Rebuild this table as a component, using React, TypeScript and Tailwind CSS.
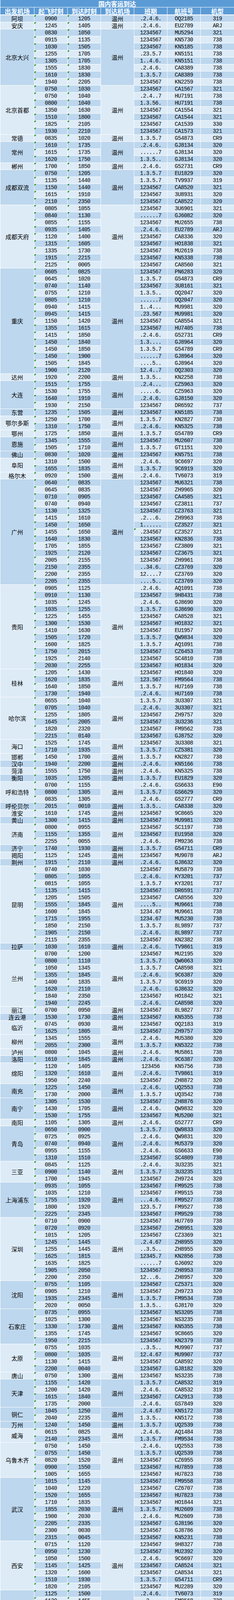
import React from 'react';

const DATA: [string, string[]][] = [
  ['阿坝', ['0900 1205 .2.4.6. OQ2185 319']],
  ['安庆', ['1245 1405 .2.4.6. EU2789 ARJ']],
  ['北京大兴', [
    '0830 1050 1234567 MU5294 321',
    '0915 1135 1234567 KN5730 738',
    '1030 1505 1234567 KN5185 738',
    '1255 1705 .23.5.7 KN5151 738',
    '1305 1705 1..4.6. KN5151 738',
    '1555 1830 .2.4.6. CA8389 738',
    '1610 1830 1.3.5.7 CA8389 738',
    '1940 2205 1234567 KN2259 738',
  ]],
  ['北京首都', [
    '0750 1030 1234567 CA1567 321',
    '0750 1040 .2.4..7 HU7191 738',
    '0800 1040 1.3.56. HU7191 738',
    '1350 1630 1234567 CA1554 321',
    '1510 1800 1234567 CA1544 321',
    '1825 2105 1234567 CA1539 330',
    '1930 2210 1234567 CA1573 321',
  ]],
  ['常德', ['0835 1020 1.3.5.7 G54873 CR9']],
  ['常州', [
    '1610 1735 .2.4.6. GJ8134 320',
    '1615 1735 ......7 GJ8134 320',
    '1620 1750 1.3.5.. GJ8134 320',
  ]],
  ['郴州', ['1700 1850 .2.4.6. G52731 CR9']],
  ['成都双流', [
    '0750 1205 1.3.5.7 EU1829 320',
    '1135 1440 1.3.5.7 TV9937 319',
    '1150 1440 1234567 CA8520 321',
    '1615 1910 1234567 3U8931 320',
    '2110 2350 1234567 CA8522 320',
  ]],
  ['成都天府', [
    '0805 1055 1234567 3U6901 321',
    '0840 1130 ......7 GJ6082 320',
    '0855 1155 1234567 MU2655 738',
    '0935 1405 .2.4.6. EU2789 ARJ',
    '1120 1400 1234567 CA8336 320',
    '1315 1605 1234567 HO1838 321',
    '1335 1730 1234567 MU2619 738',
    '1915 2215 1234567 KN5338 738',
    '2125 0005 1234567 CA8560 321',
  ]],
  ['重庆', [
    '0605 0825 1234567 PN6283 320',
    '0645 1020 1.3.5.7 G54873 CR9',
    '0740 1140 1234567 3U8161 321',
    '0755 1210 1.3.5.. OQ2047 320',
    '0805 1210 ......7 OQ2047 320',
    '0940 1415 1..4... MU9981 320',
    '0945 1415 .23.567 MU9981 320',
    '1150 1420 1234567 CA8554 321',
    '1355 1615 1234567 HU7405 738',
    '1415 1850 .2.4.6. G52731 CR9',
    '1450 1840 1.3.... GJ8964 320',
    '1450 1850 1.3.5.7 G54789 CR9',
    '1450 1900 ......7 GJ8964 320',
    '1505 1845 ....5.. GJ8964 320',
    '1900 2120 12.4..7 OQ2303 320',
  ]],
  ['达州', ['1920 2200 1.3.5.. KN2258 738']],
  ['大连', [
    '1515 1755 .2.4... CZ5963 320',
    '1530 1755 .....6. CZ5963 320',
    '1640 1910 .2.4.6. GJ8150 320',
    '1930 2150 1234567 DR6592 737',
  ]],
  ['东营', ['1235 1505 1234567 KN5185 738']],
  ['鄂尔多斯', [
    '1250 1700 1.3.5.7 KN2827 738',
    '1310 1750 .2.4.6. KN5325 738',
  ]],
  ['鄂州', ['1725 1850 1.3.5.7 G54789 CR9']],
  ['恩施', [
    '1345 1555 1234567 MU2607 738',
    '1505 1710 1.3.5.7 GT1151 320',
  ]],
  ['佛山', ['0830 1020 1234567 KN5751 738']],
  ['阜阳', [
    '1310 1500 .2.4.6. 9C6697 320',
    '1655 1835 1.3.5.7 9C6919 320',
  ]],
  ['格尔木', ['0920 1500 .2.4.6. TV6073 319']],
  ['广州', [
    '0640 0835 1234567 MU6321 738',
    '0645 0835 1234567 ZH9965 320',
    '0710 0905 1234567 CA4585 321',
    '0740 0940 1234567 CZ3811 737',
    '1130 1325 1234567 CZ3763 321',
    '1415 1610 .2...6. ZH9963 738',
    '1450 1650 1...... CZ3527 321',
    '1455 1650 *.234567 CZ3527 321',
    '1640 1830 1234567 KN2836 738',
    '1705 1855 1234567 CZ3809 321',
    '1925 2120 1234567 CZ3675 321',
    '2005 2155 1234567 ZH9961 738',
    '2150 2355 ..34.6. CZ3769 320',
    '2200 2355 12....7 CZ3769 320',
    '2205 2355 ....5.. CZ3769 320',
  ]],
  ['贵阳', [
    '0905 1125 .2.4.6. AQ1091 738',
    '0910 1130 1234567 9H8431 738',
    '1035 1245 .2.4.6. GJ8690 320',
    '1035 1255 1.3.5.7 GJ8690 320',
    '1225 1455 1234567 CA8528 321',
    '1300 1530 1234567 HO1832 321',
    '1410 1630 1234567 EU1957 320',
    '1505 1720 1.3.5.7 QW9834 320',
    '1600 1825 1.3.5.7 AQ1091 738',
    '1750 2015 1234567 CZ6453 738',
    '1925 2140 1234567 SC4810 738',
    '2030 2255 1234567 HO1834 320',
  ]],
  ['桂林', [
    '1205 1430 1234567 HO1840 320',
    '1620 1835 123.567 FM9564 738',
    '1640 1850 1.3.5.7 HU7169 738',
    '1730 1940 .2.4.6. HU7169 738',
  ]],
  ['哈尔滨', [
    '0655 1040 1.3.5.7 3U3307 321',
    '0705 1040 .2.4.6. 3U3307 321',
    '1255 1805 1234567 ZH9757 320',
    '1645 2005 1234567 3U3236 321',
    '1820 2320 1234567 FM9562 738',
    '2215 0140 1234567 GJ8752 320',
  ]],
  ['海口', [
    '1525 1745 1234567 3U3308 321',
    '1710 1935 1.3.5.7 CZ5381 320',
  ]],
  ['邯郸', ['1450 1700 1.3.5.7 KN2827 738']],
  ['汉中', ['1940 2200 .2.4.6. KN5166 738']],
  ['菏泽', ['1555 1750 .2.4.6. KN5325 738']],
  ['衡阳', ['1035 1205 1.3.5.7 EU1829 320']],
  ['呼和浩特', [
    '0700 1155 .2.4.6. GS6633 E90',
    '0800 1305 1.3.5.7 GS6629 320',
    '0835 1305 .2.4.6. G52777 CR9',
  ]],
  ['呼伦贝尔', ['2015 0010 1.3.5.. CA8338 320']],
  ['淮安', ['1610 1745 1234567 9C8665 320']],
  ['黄山', ['1300 1415 1234567 MU9981 320']],
  ['济南', [
    '0800 0955 1234567 SC1197 738',
    '1155 1355 1234567 EU1958 320',
    '2255 0055 .2.4.6. FM9236 738',
  ]],
  ['济宁', ['1740 1930 1.3.5.7 G54711 CR9']],
  ['揭阳', ['1125 1245 1234567 MU9078 ARJ']],
  ['荆州', ['1915 2110 .2.4.6. GJ8632 320']],
  ['昆明', [
    '0740 1030 1234567 MU5879 738',
    '0805 1055 .2.4.6. KY3201 737',
    '0815 1055 1.3.5.7 KY3201 737',
    '1135 1415 1234567 DR6591 737',
    '1205 1505 1234567 CA8556 320',
    '1555 1845 ....5.. MU9661 738',
    '1600 1845 1234.67 MU9661 738',
    '1715 1955 1234.67 MU5230 738',
    '1850 2150 1.3.5.7 8L9897 737',
    '1905 2150 .2.4.6. 8L9897 737',
    '2115 2355 1234567 KN2382 738',
  ]],
  ['拉萨', ['1030 1610 .2.4.6. TV9861 319']],
  ['兰州', [
    '0700 1200 1234567 MU2195 320',
    '0800 1110 1.3.5.7 QW6063 320',
    '1050 1345 1.3.5.7 CA8598 321',
    '1355 1845 .2.4.6. 9C6387 320',
    '1400 1835 1.3.5.7 9C6919 320',
    '1620 2110 .2.4.6. GJ8632 320',
    '1840 2350 1234567 HO1842 321',
    '1940 2245 .2.4.6. CA8598 320',
  ]],
  ['丽江', ['0700 0950 1234567 8L9827 737']],
  ['连云港', ['1530 1730 1234567 KN5355 738']],
  ['临沂', [
    '0745 0930 1234567 OQ2183 319',
    '1625 1805 1234567 ZH9757 320',
  ]],
  ['柳州', [
    '1345 1555 .2.4.6. MU5380 320',
    '2055 2300 1.3.5.7 KN5322 738',
  ]],
  ['泸州', ['0800 1045 .2.4.6. MU5861 738']],
  ['洛阳', ['1610 1845 .2.4.6. 9C6387 320']],
  ['绵阳', [
    '1120 1405 123456 KN5756 738',
    '1320 1610 .2.4.6. TV9861 319',
    '1950 2240 1234567 ZH8872 320',
  ]],
  ['南充', [
    '1225 1450 .2.4.6. UQ2553 738',
    '1730 2000 1.3.5.7 UQ3542 738',
  ]],
  ['南宁', [
    '1305 1530 1234567 ZH8876 320',
    '1430 1705 .2.4.6. QW9832 320',
    '1530 1755 1234567 MU5200 321',
  ]],
  ['南阳', ['1105 1305 .2.4.6. G52777 CR9']],
  ['青岛', [
    '0650 0900 1.3.5.7 QW9833 320',
    '0725 0925 .2.4.6. QW9831 320',
    '0740 0940 .2.4.6. MU5379 320',
    '0955 1155 .2.4.6. GS6633 E90',
    '1310 1510 1234567 SC4809 738',
  ]],
  ['三亚', [
    '0845 1125 .2.4.6. 3U3235 321',
    '0900 1140 1.3.5.7 3U3235 321',
    '1700 1945 1234567 ZH9724 320',
  ]],
  ['上海浦东', [
    '0935 1055 1234567 FM9525 738',
    '1035 1210 1234567 FM9515 738',
    '1755 1920 ...4.6. FM9527 738',
    '1800 1920 123.5.7 FM9527 738',
    '2225 2345 1234567 FM9529 738',
  ]],
  ['深圳', [
    '0710 0900 1234567 HU7769 738',
    '0720 0920 1234567 ZH8951 320',
    '1015 1205 1234567 CZ3369 321',
    '1245 1445 .2.4.67 ZH8955 320',
    '1255 1445 ..3.5.. ZH8955 320',
    '1625 1815 12345.7 KN2856 738',
    '1635 1825 ......7 GJ6092 320',
    '1905 2050 1234567 ZH8953 738',
    '2200 2350 12...6. ZH8957 320',
  ]],
  ['沈阳', [
    '0755 1105 1234567 CZ5371 320',
    '0905 1210 1234567 ZH9723 320',
    '1935 2345 1.3.5.7 FM9534 738',
    '2020 0050 1.3.5.. GJ8170 320',
  ]],
  ['石家庄', [
    '0735 0955 1234567 NS3205 738',
    '1025 1300 1234567 NS3235 738',
    '1330 1730 1234567 KN5355 738',
    '1355 1745 1234567 9C8665 320',
    '1950 2215 1234567 KN2379 738',
  ]],
  ['太原', [
    '0755 1035 ..3.5.. MU9907 737',
    '0800 1035 12.4.67 MU9907 737',
    '1130 1415 1234567 CA8592 320',
    '2200 0040 1234567 GJ8182 320',
  ]],
  ['唐山', ['0750 1300 1234567 NS3235 738']],
  ['天津', [
    '1155 1420 1.3.5.7 CA8532 319',
    '1200 1420 .2.4.6. CA8532 319',
    '1615 1840 1234567 CA2913 738',
    '1735 2000 .2.4.6. GS7849 320',
  ]],
  ['铜仁', [
    '1045 1250 .2.4.67 KN5172 738',
    '2040 2235 1.3.5.. KN5172 738',
  ]],
  ['万州', ['1240 1450 1.3.5.7 UQ2539 738']],
  ['威海', [
    '0615 0825 .2.4.6. AQ1484 738',
    '2140 2345 1.3.5.7 FM9534 738',
  ]],
  ['乌鲁木齐', [
    '0750 1450 .2.4.6. UQ2553 738',
    '0755 1450 1.3.5.7 UQ2539 738',
    '0820 1520 1234567 CZ6955 738',
    '0900 1550 1234567 HU7859 738',
    '1005 1655 1234567 HU7823 738',
  ]],
  ['武汉', [
    '1015 1145 1234567 FM9558 738',
    '1040 1220 1234567 CZ6707 738',
    '1520 1655 1234567 HU7823 738',
    '1710 1835 1234567 HO1844 321',
    '1855 2030 1.3.5.7 MU2609 738',
    '1900 2030 .2.4.6. MU2609 738',
    '2205 2335 1234567 GJ8196 320',
    '2300 0030 1234567 GJ8786 320',
    '2315 0045 1234567 KN5231 738',
  ]],
  ['西安', [
    '0715 1120 1234567 9H8327 738',
    '0950 1230 1234567 MU2392 320',
    '1050 1500 .2.4.6. 9C6697 320',
    '1145 1425 1234567 CA8524 321',
    '1320 1600 1234567 CA8534 321',
    '1510 1930 1.3.5.7 G54711 CR9',
    '1820 2105 1234567 MU2289 320',
  ]],
  ['西宁', [
    '1125 1500 .2.4.6. TV6073 319',
    '1130 1455 ..3.... FM9568 738',
    '1835 2225 .2..5.. FM9568 738',
    '1915 0030 1.3.5.7 GJ8786 320',
    '1935 0030 .2.4.6. GJ8786 320',
  ]],
  ['西双版纳', [
    '0700 1010 1234567 8L9611 737',
    '1700 2145 1234567 GJ8012 320',
  ]],
  ['襄阳', [
    '1655 1840 1.3.... GJ8964 320',
    '1710 1845 ....5.. GJ8964 320',
    '1710 1900 ......7 GJ8964 320',
  ]],
  ['信阳', ['1600 1730 1234567 MU2619 738']],
  ['兴义', [
    '1135 1400 .2.4.6. KN5190 738',
    '1305 1540 1.3.5.7 G54067 CR9',
    '1550 1825 .2.4.6. AQ1364 738',
  ]],
  ['徐州', [
    '2125 2300 1.3.5.. PN6465 320',
    '2310 0050 1.3.5.. GJ8170 320',
  ]],
  ['烟台', ['2110 2320 1234567 FM9562 738']],
  ['宜宾', ['1600 1910 1234567 ZH8878 320']],
  ['宜昌', [
    '0930 1120 1234567 9H8327 738',
    '2030 2220 .2.4.67 KN2818 738',
  ]],
  ['宜春', [
    '1035 1210 1.3.5.. OQ2047 320',
    '1040 1210 ......7 OQ2047 320',
  ]],
  ['银川', [
    '1250 1735 .2.4.6. GJ8134 320',
    '1300 1735 ......7 GJ8134 320',
    '1300 1750 1.3.5.. GJ8134 320',
    '1530 1900 .2.4.6. EU1983 320',
    '1915 0010 1.34.67 FM9446 738',
  ]],
  ['榆林', ['1840 2115 1.3.5.7 GS6517 E90']],
  ['运城', ['1325 1545 1234567 ZH8191 320']],
  ['湛江', ['1600 1810 1.3.5.7 QW6064 320']],
  ['张家界', [
    '1115 1305 1...5.7 FM9554 738',
    '2150 2350 1234567 HO1842 321',
  ]],
  ['长春', [
    '1720 2030 1234567 CZ3370 321',
    '1935 2245 1234567 CA8518 320',
  ]],
  ['长沙', [
    '1005 1140 1234567 3U8161 321',
    '1005 1150 1234567 HO1836 321',
    '1345 1520 1234567 CZ6955 738',
    '1720 1905 .2.4.6. KN2808 738',
    '1905 2040 ......7 KN2808 738',
  ]],
  ['郑州', [
    '0735 0935 1234567 FM9523 738',
    '0755 1005 1234567 CZ6639 738',
    '0845 1100 1.3.5.7 GT1039 320',
    '0950 1200 1234567 MU2195 320',
    '1030 1240 1.3.5.7 UQ3533 738',
    '1050 1305 1.3.5.7 GS6629 320',
    '1350 1550 1234567 HU7859 738',
    '2005 2210 1234567 PN6331 320',
    '2010 2220 1234567 HO1828 321',
    '2210 0010 1.34.67 FM9446 738',
  ]],
  ['舟山', ['1600 1705 1234567 KN5151 738']],
  ['珠海', [
    '1405 1605 1234567 SC1198 738',
    '1705 1850 .2.4.6. HU7630 738',
    '1755 1940 1.3.5.7 HU7630 738',
  ]],
  ['遵义新舟', [
    '1035 1250 1.3.5.. KN5696 738',
    '1135 1405 ......7 KN5696 738',
    '1920 2145 1234567 GJ8012 320',
    '2125 2340 .2.4.6. KN5696 738',
  ]],
];

const SPAN: Record<number, string> = {
  1: 'row-span-1',
  2: 'row-span-2',
  3: 'row-span-3',
  4: 'row-span-4',
  5: 'row-span-5',
  6: 'row-span-6',
  7: 'row-span-7',
  8: 'row-span-8',
  9: 'row-span-9',
  10: 'row-span-10',
  11: 'row-span-11',
  12: 'row-span-12',
  15: 'row-span-15',
};

const DARK = 'bg-[#bdd7ee]';
const LIGHT = 'bg-[#ddebf7]';
// merged cells whose fill differs from the banding of their first row
const GROUP_FILL: Record<string, string> = { 北京首都: LIGHT };
const CJK = "font-['Noto_Sans_CJK_SC',sans-serif] text-[15px] leading-[15px] text-black";
const MONO = "h-[17px] font-['Liberation_Mono',monospace] text-[14px] leading-[14px] tracking-[-0.6px] text-black";
const CELL = 'relative flex items-center justify-center overflow-hidden';
const HEADGRID = 'mt-px grid h-[18px] grid-cols-[86px_84px_84px_84px_84px_84px_85px] gap-px';
const BODYGRID = 'mt-[2px] grid auto-rows-[17px] grid-cols-[86px_84px_84px_84px_84px_84px_85px] gap-px';

function Tri() {
  return (
    <span className="absolute left-0 top-0 h-[5px] w-[5px] bg-[#0b8a0b] [clip-path:polygon(0_0,100%_0,0_100%)]" />
  );
}

const HEAD = ['出发机场', '起飞时刻', '到达时刻', '到达机场', '班期', '航班号', '机型'];

export default function App() {
  const cells: React.ReactNode[] = [];
  let idx = 0;
  DATA.forEach(([name, rows], gi) => {
    const n = rows.length;
    const groupBg = GROUP_FILL[name] ?? (idx % 2 === 0 ? DARK : LIGHT);
    rows.forEach((r, ri) => {
      const [dep, arr, daysRaw, fn, type] = r.split(' ');
      const mark = daysRaw.startsWith('*');
      const days = mark ? daysRaw.slice(1) : daysRaw;
      const bg = idx % 2 === 0 ? DARK : LIGHT;
      const k = `${gi}-${ri}`;
      if (ri === 0) {
        cells.push(
          <div key={`o${k}`} className={[SPAN[n], groupBg, CELL, CJK].join(' ')}>
            {name}
          </div>
        );
      }
      cells.push(
        <div key={`d${k}`} className={[bg, CELL, MONO].join(' ')}>
          <Tri />
          {dep}
        </div>
      );
      cells.push(
        <div key={`a${k}`} className={[bg, CELL, MONO].join(' ')}>
          <Tri />
          {arr}
        </div>
      );
      if (ri === 0) {
        cells.push(
          <div key={`w${k}`} className={[SPAN[n], groupBg, CELL, CJK].join(' ')}>
            温州
          </div>
        );
      }
      cells.push(
        <div key={`b${k}`} className={[bg, CELL, MONO].join(' ')}>
          {mark ? <Tri /> : null}
          {days}
        </div>
      );
      cells.push(
        <div key={`f${k}`} className={[bg, CELL, MONO].join(' ')}>
          {fn}
        </div>
      );
      cells.push(
        <div key={`t${k}`} className={[bg, CELL, MONO].join(' ')}>
          {type}
        </div>
      );
      idx++;
    });
  });

  return (
    <div className="h-[5115px] w-[598px] overflow-hidden bg-white pl-px">
      <div className="flex h-[18px] items-center justify-center bg-[#5b9bd5] font-['Noto_Sans_CJK_SC',sans-serif] text-[16px] font-bold leading-[16px] text-white">
        国内客运到达
      </div>
      <div className={HEADGRID}>
        {HEAD.map((h) => (
          <div
            key={h}
            className="flex h-[18px] items-center justify-center bg-[#5b9bd5] font-['Noto_Sans_CJK_SC',sans-serif] text-[16px] font-bold leading-[16px] text-white"
          >
            {h}
          </div>
        ))}
      </div>
      <div className={BODYGRID}>{cells}</div>
      <div className="mt-px flex h-[18px] w-[595px] items-center justify-center overflow-hidden bg-[#ddebf7] font-['Noto_Sans_CJK_SC',sans-serif] text-[15px] leading-[15px] text-black">
        具体航班计划以各大航司官网为准。
      </div>
    </div>
  );
}
